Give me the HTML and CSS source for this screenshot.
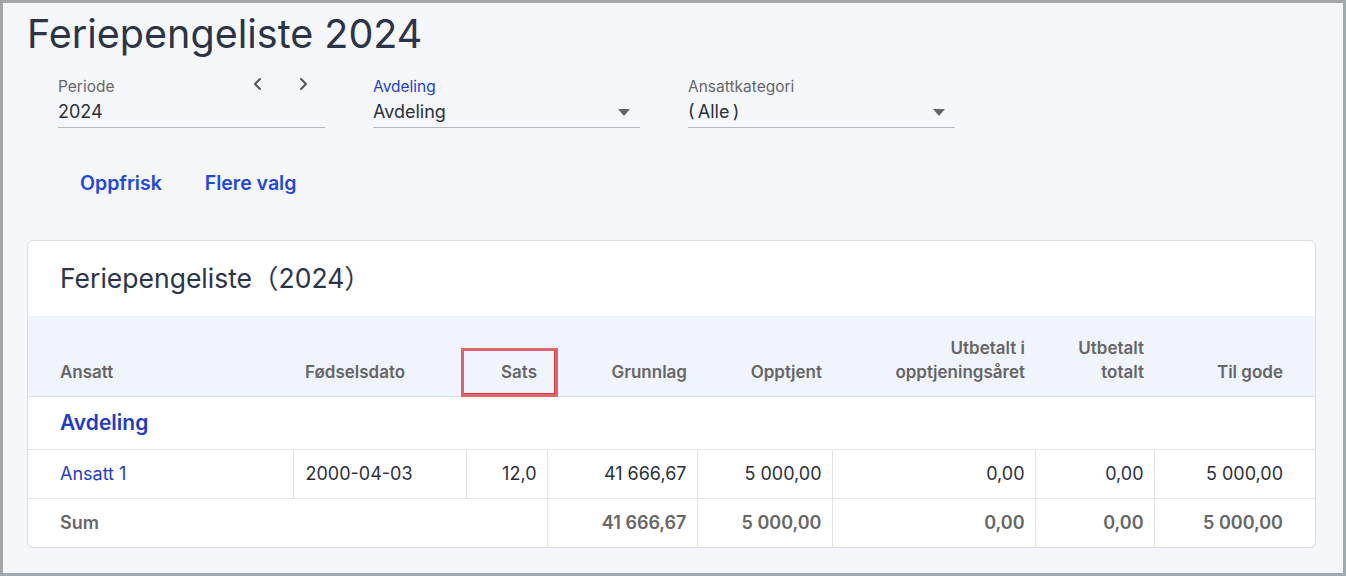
FILE: index.html
```html
<!DOCTYPE html>
<html lang="no">
<head>
<meta charset="utf-8">
<title>Feriepengeliste 2024</title>
<link rel="stylesheet" href="styles.css">
</head>
<body>
<div class="frame">
  <h1 class="title">Feriepengeliste 2024</h1>

  <div class="filters">
    <div class="field">
      <div class="field-top">
        <span class="label">Periode</span>
        <span class="nav">
          <svg class="chev" width="12" height="14" viewBox="0 0 12 14"><polyline points="8,2 3,7 8,12" fill="none" stroke="#555" stroke-width="2" stroke-linecap="round" stroke-linejoin="round"/></svg>
          <svg class="chev" width="12" height="14" viewBox="0 0 12 14"><polyline points="4,2 9,7 4,12" fill="none" stroke="#555" stroke-width="2" stroke-linecap="round" stroke-linejoin="round"/></svg>
        </span>
      </div>
      <div class="value">2024</div>
    </div>
    <div class="field">
      <div class="field-top"><span class="label label-active">Avdeling</span></div>
      <div class="value value-select">Avdeling<span class="caret"></span></div>
    </div>
    <div class="field">
      <div class="field-top"><span class="label">Ansattkategori</span></div>
      <div class="value value-select"><span>(&#8201;Alle&#8201;)</span><span class="caret"></span></div>
    </div>
  </div>

  <div class="actions">
    <button class="link-btn">Oppfrisk</button>
    <button class="link-btn">Flere valg</button>
  </div>

  <div class="card">
    <h2 class="card-title">Feriepengeliste<span class="cjk">（2024）</span></h2>
    <table class="grid">
      <colgroup>
        <col class="c1"><col class="c2"><col class="c3"><col class="c4"><col class="c5"><col class="c6"><col class="c7"><col class="c8">
      </colgroup>
      <thead>
        <tr>
          <th class="left first">Ansatt</th>
          <th class="left">Fødselsdato</th>
          <th class="num highlight">Sats<span class="mark"></span></th>
          <th class="num">Grunnlag</th>
          <th class="num">Opptjent</th>
          <th class="num">Utbetalt i<br>opptjeningsåret</th>
          <th class="num">Utbetalt<br>totalt</th>
          <th class="num last">Til gode</th>
        </tr>
      </thead>
      <tbody>
        <tr class="group">
          <td colspan="8" class="first">Avdeling</td>
        </tr>
        <tr class="data">
          <td class="first"><a class="emp">Ansatt 1</a></td>
          <td class="left">2000-04-03</td>
          <td class="num">12,0</td>
          <td class="num">41 666,67</td>
          <td class="num">5 000,00</td>
          <td class="num">0,00</td>
          <td class="num">0,00</td>
          <td class="num last">5 000,00</td>
        </tr>
        <tr class="sum">
          <td colspan="3" class="first">Sum</td>
          <td class="num">41 666,67</td>
          <td class="num">5 000,00</td>
          <td class="num">0,00</td>
          <td class="num">0,00</td>
          <td class="num last">5 000,00</td>
        </tr>
      </tbody>
    </table>
  </div>
</div>
</body>
</html>
```

FILE: styles.css
```css
* { box-sizing: border-box; }

html, body {
  margin: 0;
  padding: 0;
}

body {
  font-family: Inter, "Noto Sans", sans-serif;
  color: #2a2f3a;
  background: #f6f7fb;
}

.frame {
  width: 1346px;
  height: 576px;
  border: 3px solid #9eabb3;
  border-top-color: #a3a6a8;
  border-left-color: #a3a6a8;
  background: #f6f7fb;
  padding: 7px 27px 0 24px;
  overflow: hidden;
}

.cjk {
  font-family: Inter, "Noto Sans CJK JP", sans-serif;
}

.title {
  margin: 0;
  font-size: 39.5px;
  line-height: 48px;
  font-weight: 400;
  color: #2b3447;
}

.filters {
  display: flex;
  gap: 48px;
  margin-top: 19px;
  padding-left: 31px;
}

.field {
  width: 267px;
  border-bottom: 1px solid #b5b8bd;
  padding-bottom: 3px;
}

.field-top {
  display: flex;
  align-items: center;
  justify-content: space-between;
  height: 20px;
}

.label {
  font-size: 15.5px;
  line-height: 20px;
  color: #666;
}

.label-active {
  color: #1f3fd1;
}

.nav {
  display: flex;
  gap: 33px;
  margin-right: 16px;
  margin-top: -6px;
}

.chev { display: block; }

.value {
  font-size: 18px;
  line-height: 24px;
  margin-top: 3px;
  color: #2a2f3a;
  display: flex;
  align-items: center;
  justify-content: space-between;
}

.caret {
  width: 0;
  height: 0;
  border-left: 6.5px solid transparent;
  border-right: 6.5px solid transparent;
  border-top: 7px solid #666;
  margin-right: 10px;
}

.actions {
  display: flex;
  gap: 3px;
  margin-top: 35px;
  padding-left: 33px;
}

.link-btn {
  font-family: Inter, sans-serif;
  font-size: 19.5px;
  line-height: 24px;
  font-weight: 600;
  color: #2147e0;
  background: none;
  border: 0;
  padding: 8px 20px;
  cursor: pointer;
}

.card {
  margin-top: 37px;
  background: #fff;
  border: 1px solid #dcdee3;
  border-radius: 6px;
  overflow: hidden;
}

.card-title {
  margin: 0;
  padding: 19px 32px 20px;
  font-size: 26.5px;
  line-height: 36px;
  font-weight: 400;
  color: #2b3447;
}

.grid {
  width: 100%;
  border-collapse: collapse;
  table-layout: fixed;
}

.c1 { width: 265px; }
.c2 { width: 173px; }
.c3 { width: 81px; }
.c4 { width: 150px; }
.c5 { width: 135px; }
.c6 { width: 203px; }
.c7 { width: 119px; }
.c8 { width: auto; }

.grid th {
  background: #f0f4fd;
  height: 80px;
  vertical-align: bottom;
  padding: 0 10px 12px 12px;
  font-size: 17px;
  line-height: 24px;
  font-weight: 600;
  color: #666;
  border-bottom: 1px solid #dedfe3;
}

.grid th.left, .grid td.left { text-align: left; }
.grid th.num, .grid td.num { text-align: right; padding-right: 10px; }
.grid th.first, .grid td.first { padding-left: 32px; text-align: left; }
.grid th.last, .grid td.last { padding-right: 32px; }

.highlight { position: relative; }

.mark {
  position: absolute;
  left: -5px;
  right: -11px;
  top: 32px;
  bottom: -1px;
  border: 3px solid #de666b;
  box-shadow: inset -1px -1px 0 #d9373a;
  pointer-events: none;
}

.grid td {
  font-size: 18px;
  line-height: 24px;
  padding: 0 10px 0 12px;
  border-left: 1px solid #e3e3e6;
  border-bottom: 1px solid #e3e3e6;
  white-space: nowrap;
}

.grid td.first { border-left: 0; }

.group td {
  height: 53px;
  font-size: 21px;
  font-weight: 600;
  color: #1f3bc7;
}

.data td {
  height: 49px;
  color: #2a2f3a;
}

.emp {
  color: #1f3bc7;
  text-decoration: none;
}

.sum td {
  height: 49px;
  font-weight: 600;
  color: #666;
  border-bottom: 0;
}
```
